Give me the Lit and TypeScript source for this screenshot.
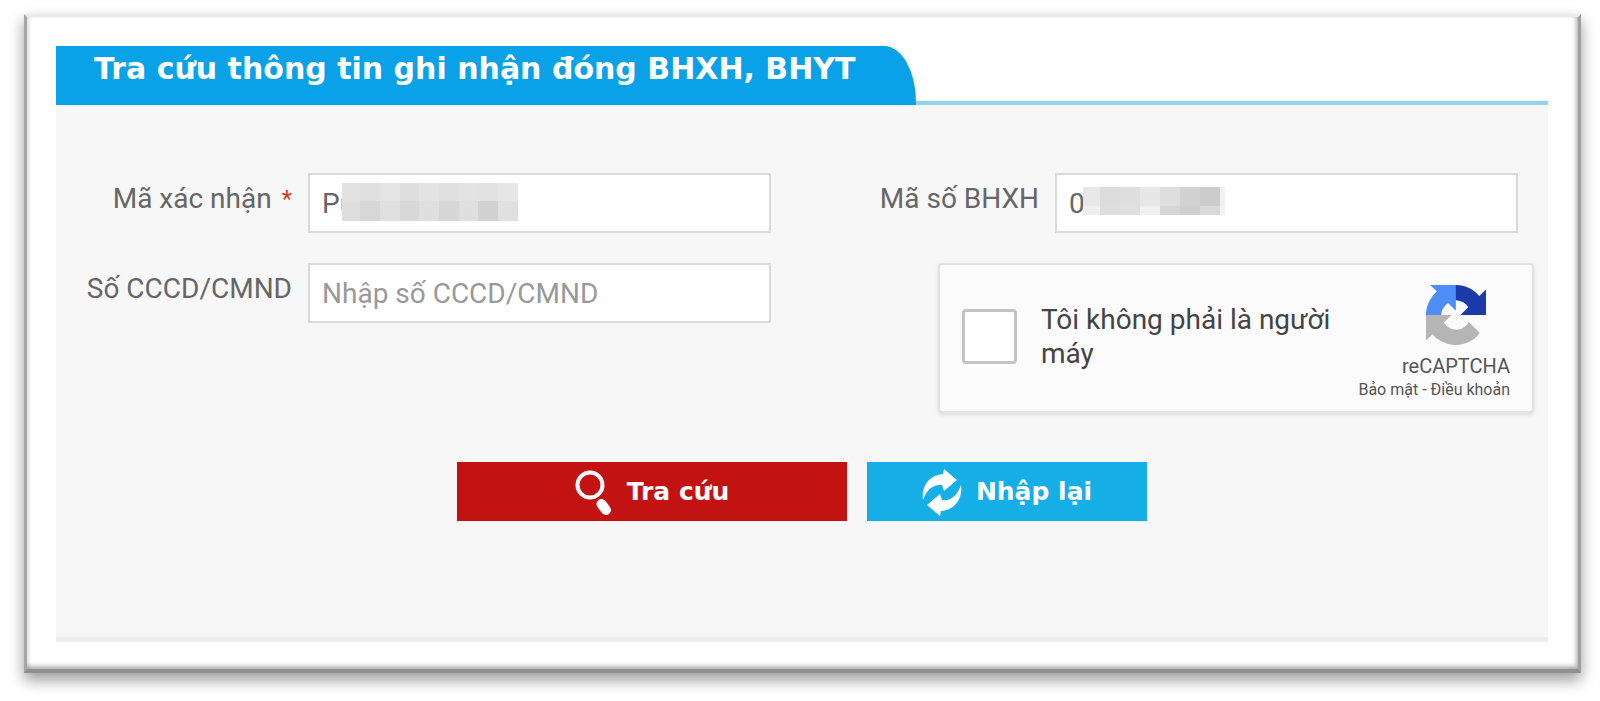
import { LitElement, html, css, svg } from "lit";
import { customElement } from "lit/decorators.js";

type Cell = [x: number, y: number, w: number, h: number, fill: string];

const CODE_MASK: Cell[] = [
  [0, 0, 18, 18, "#e2e2e2"], [18, 0, 20, 18, "#e0e0e0"], [38, 0, 20, 18, "#e4e4e4"],
  [58, 0, 19, 18, "#dfdfdf"], [77, 0, 20, 18, "#e3e3e3"], [97, 0, 20, 18, "#e0e0e0"],
  [117, 0, 19, 18, "#e3e3e3"], [136, 0, 20, 18, "#e2e2e2"], [156, 0, 20, 18, "#e7e7e7"],
  [0, 18, 18, 20, "#dedede"], [18, 18, 20, 20, "#d7d7d7"], [38, 18, 20, 20, "#e0e0e0"],
  [58, 18, 19, 20, "#d8d8d8"], [77, 18, 20, 20, "#dfdfdf"], [97, 18, 20, 20, "#d6d6d6"],
  [117, 18, 19, 20, "#dfdfdf"], [136, 18, 20, 20, "#d2d2d2"], [156, 18, 20, 20, "#e0e0e0"],
];

const NUMBER_MASK: Cell[] = [
  [0, 0, 17, 19, "#e8e8e8"], [17, 0, 20, 19, "#dcdcdc"], [37, 0, 20, 19, "#dfdfdf"],
  [57, 0, 20, 19, "#e7e7e7"], [77, 0, 20, 19, "#dedede"], [97, 0, 20, 19, "#d2d2d2"],
  [117, 0, 20, 19, "#cccccc"], [137, 0, 5, 19, "#f0f0f0"],
  [0, 19, 17, 9, "#eeeeee"], [17, 19, 20, 9, "#dedede"], [37, 19, 20, 9, "#e0e0e0"],
  [57, 19, 20, 9, "#f0f0f0"], [77, 19, 20, 9, "#d6d6d6"], [97, 19, 20, 9, "#cfcfcf"],
  [117, 19, 20, 9, "#dadada"], [137, 19, 5, 9, "#f3f3f3"],
];

@customElement("app-root")
export class AppRoot extends LitElement {
  static styles = css`
    * {
      box-sizing: border-box;
    }
    :host {
      display: block;
      padding: 14px 19px 25px 24px;
      background: #fff;
      font-family: Roboto, sans-serif;
      font-size: 28px;
      color: #666;
    }
    .card {
      padding: 29px 30px 27px 29px;
      background: #fff;
      border-style: solid;
      border-width: 3px 3px 4px;
      border-color: #ebebeb #a0a0a0 #909090 #a6a6a6;
      box-shadow: 0 7px 14px rgba(0, 0, 0, 0.4),
        inset -2px -3px 4px rgba(0, 0, 0, 0.3),
        inset 3px 0 3px rgba(0, 0, 0, 0.08);
    }
    .head {
      border-bottom: 4px solid #8fd3f3;
    }
    .tab {
      width: fit-content;
      height: 59px;
      margin: 0 0 -4px;
      padding: 0 60px 0 38px;
      background: #09a2e8;
      border-top-right-radius: 32px 56px;
      color: #fff;
      font: bold 30px/46px "DejaVu Sans", sans-serif;
      white-space: nowrap;
    }
    .panel {
      padding: 68px 0 116px;
      background: #f7f7f7;
      border-bottom: 5px solid #ededed;
    }
    .fields {
      display: grid;
      grid-template-columns: 1fr 1fr;
      gap: 30px 2px;
    }
    .field {
      display: grid;
      grid-template-columns: 236px 1fr;
      align-items: start;
      gap: 16px;
      padding-right: 30px;
    }
    .label {
      display: flex;
      justify-content: flex-end;
      gap: 10px;
      line-height: 52px;
      white-space: nowrap;
    }
    .star {
      color: #d8332f;
      font-size: 24px;
    }
    .control {
      position: relative;
    }
    .input {
      display: block;
      width: 100%;
      height: 60px;
      padding: 0 12px;
      border: 2px solid #dadada;
      border-radius: 0;
      background: #fff;
      color: #666;
      font: inherit;
      outline: none;
    }
    .input::placeholder {
      color: #999;
      opacity: 1;
    }
    .mask {
      position: absolute;
      top: 10px;
      left: 34px;
    }
    .mask.low {
      top: 14px;
      left: 28px;
    }
    .captcha {
      display: flex;
      justify-self: end;
      align-items: flex-start;
      width: 596px;
      height: 150px;
      margin-right: 14px;
      padding: 0 22px;
      border: 2px solid #e2e2e2;
      border-radius: 4px;
      background: #fbfbfb;
      box-shadow: 0 2px 4px rgba(0, 0, 0, 0.1);
    }
    .check {
      appearance: none;
      flex: none;
      width: 55px;
      height: 55px;
      margin: 44px 24px 0 0;
      border: 3px solid #c4c4c4;
      border-radius: 4px;
      background: #fff;
    }
    .prompt {
      width: 300px;
      padding-top: 38px;
      color: #444;
      line-height: 34px;
    }
    .brand {
      display: flex;
      flex: 1;
      flex-direction: column;
      align-items: flex-end;
      padding-top: 20px;
      color: #555;
      white-space: nowrap;
    }
    .logo {
      margin-right: 24px;
    }
    .name {
      padding-top: 8px;
      font-size: 20px;
      line-height: 26px;
    }
    .terms {
      font-size: 16px;
      line-height: 22px;
    }
    .link {
      color: inherit;
      text-decoration: none;
    }
    .actions {
      display: flex;
      justify-content: center;
      gap: 20px;
      margin-top: 49px;
    }
    .button {
      display: flex;
      justify-content: center;
      align-items: center;
      gap: 14px;
      width: 390px;
      height: 59px;
      padding: 0;
      border: 0;
      background: #c31212;
      color: #fff;
      font: bold 25px/40px "DejaVu Sans", sans-serif;
    }
    .button.reset {
      width: 280px;
      background: #15aee7;
    }
  `;

  private mask(cells: Cell[], width: number, height: number, cls: string) {
    return html`<svg class=${cls} width=${width} height=${height} shape-rendering="crispEdges" aria-hidden="true">
      ${cells.map(([x, y, w, h, fill]) => svg`<rect x=${x} y=${y} width=${w} height=${h} fill=${fill} />`)}
    </svg>`;
  }

  render() {
    return html`
      <main class="card">
        <header class="head">
          <h1 class="tab">Tra cứu thông tin ghi nhận đóng BHXH, BHYT</h1>
        </header>
        <form class="panel" @submit=${(e: Event) => e.preventDefault()}>
          <div class="fields">
            <div class="field">
              <label class="label" for="code">Mã xác nhận <span class="star">*</span></label>
              <div class="control">
                <input class="input" id="code" type="text" value="Pu" />
                ${this.mask(CODE_MASK, 176, 38, "mask")}
              </div>
            </div>
            <div class="field">
              <label class="label" for="bhxh">Mã số BHXH</label>
              <div class="control">
                <input class="input" id="bhxh" type="text" value="0" />
                ${this.mask(NUMBER_MASK, 142, 28, "mask low")}
              </div>
            </div>
            <div class="field">
              <label class="label" for="cccd">Số CCCD/CMND</label>
              <div class="control">
                <input class="input" id="cccd" type="text" placeholder="Nhập số CCCD/CMND" />
              </div>
            </div>
            <div class="captcha">
              <input class="check" id="robot" type="checkbox" />
              <label class="prompt" for="robot">Tôi không phải là người máy</label>
              <div class="brand">
                <svg class="logo" width="60" height="60" viewBox="0 0 64 64" aria-hidden="true">
                  <path fill="#1c3aa9" d="M64 31.955l-.033-1.37V4.687l-7.16 7.16C50.948 4.674 42.033.093 32.05.093c-10.4 0-19.622 4.96-25.458 12.64l11.736 11.86a15.55 15.55 0 0 1 4.754-5.334c2.05-1.6 4.952-2.906 8.968-2.906.485 0 .86.057 1.135.163 4.976.393 9.288 3.14 11.828 7.124l-8.307 8.307L64 31.953" />
                  <path fill="#4c8df6" d="M31.862.094l-1.37.033H4.594l7.16 7.16C4.58 13.147 0 22.06 0 32.046c0 10.4 4.96 19.622 12.64 25.458L24.5 45.768a15.55 15.55 0 0 1-5.334-4.754c-1.6-2.05-2.906-4.952-2.906-8.968 0-.485.057-.86.163-1.135.393-4.976 3.14-9.288 7.124-11.828l8.307 8.307L31.86.095" />
                  <path fill="#b5b5b5" d="M.001 32.045l.033 1.37v25.898l7.16-7.16c5.86 7.173 14.774 11.754 24.76 11.754 10.4 0 19.622-4.96 25.458-12.64l-11.736-11.86a15.55 15.55 0 0 1-4.754 5.334c-2.05 1.6-4.952 2.906-8.968 2.906-.485 0-.86-.057-1.135-.163-4.976-.393-9.288-3.14-11.828-7.124l8.307-8.307c-10.522.04-22.4.066-27.295-.005" />
                </svg>
                <span class="name">reCAPTCHA</span>
                <span class="terms"><a class="link" href="#privacy">Bảo mật</a> - <a class="link" href="#terms">Điều khoản</a></span>
              </div>
            </div>
          </div>
          <div class="actions">
            <button class="button" type="submit">
              <svg width="38" height="48" viewBox="0 0 38 48" aria-hidden="true">
                <circle cx="15" cy="17" r="12.5" fill="none" stroke="#fff" stroke-width="4" />
                <path d="M26.500 36l4.500 6" stroke="#fff" stroke-width="10" stroke-linecap="round" />
              </svg>
              Tra cứu
            </button>
            <button class="button reset" type="reset">
              <svg width="40" height="48" viewBox="0 0 40 48" fill="#fff" aria-hidden="true">
                <path d="M1 32C-1 17 8 7 21 6L22 1L35 12L22 23L20 17C11 16 5 21 1 32z" />
                <path d="M39 17C41 32 32 42 19 43L18 48L5 37L18 26L20 32C29 33 35 28 39 17z" />
              </svg>
              Nhập lại
            </button>
          </div>
        </form>
      </main>
    `;
  }
}
